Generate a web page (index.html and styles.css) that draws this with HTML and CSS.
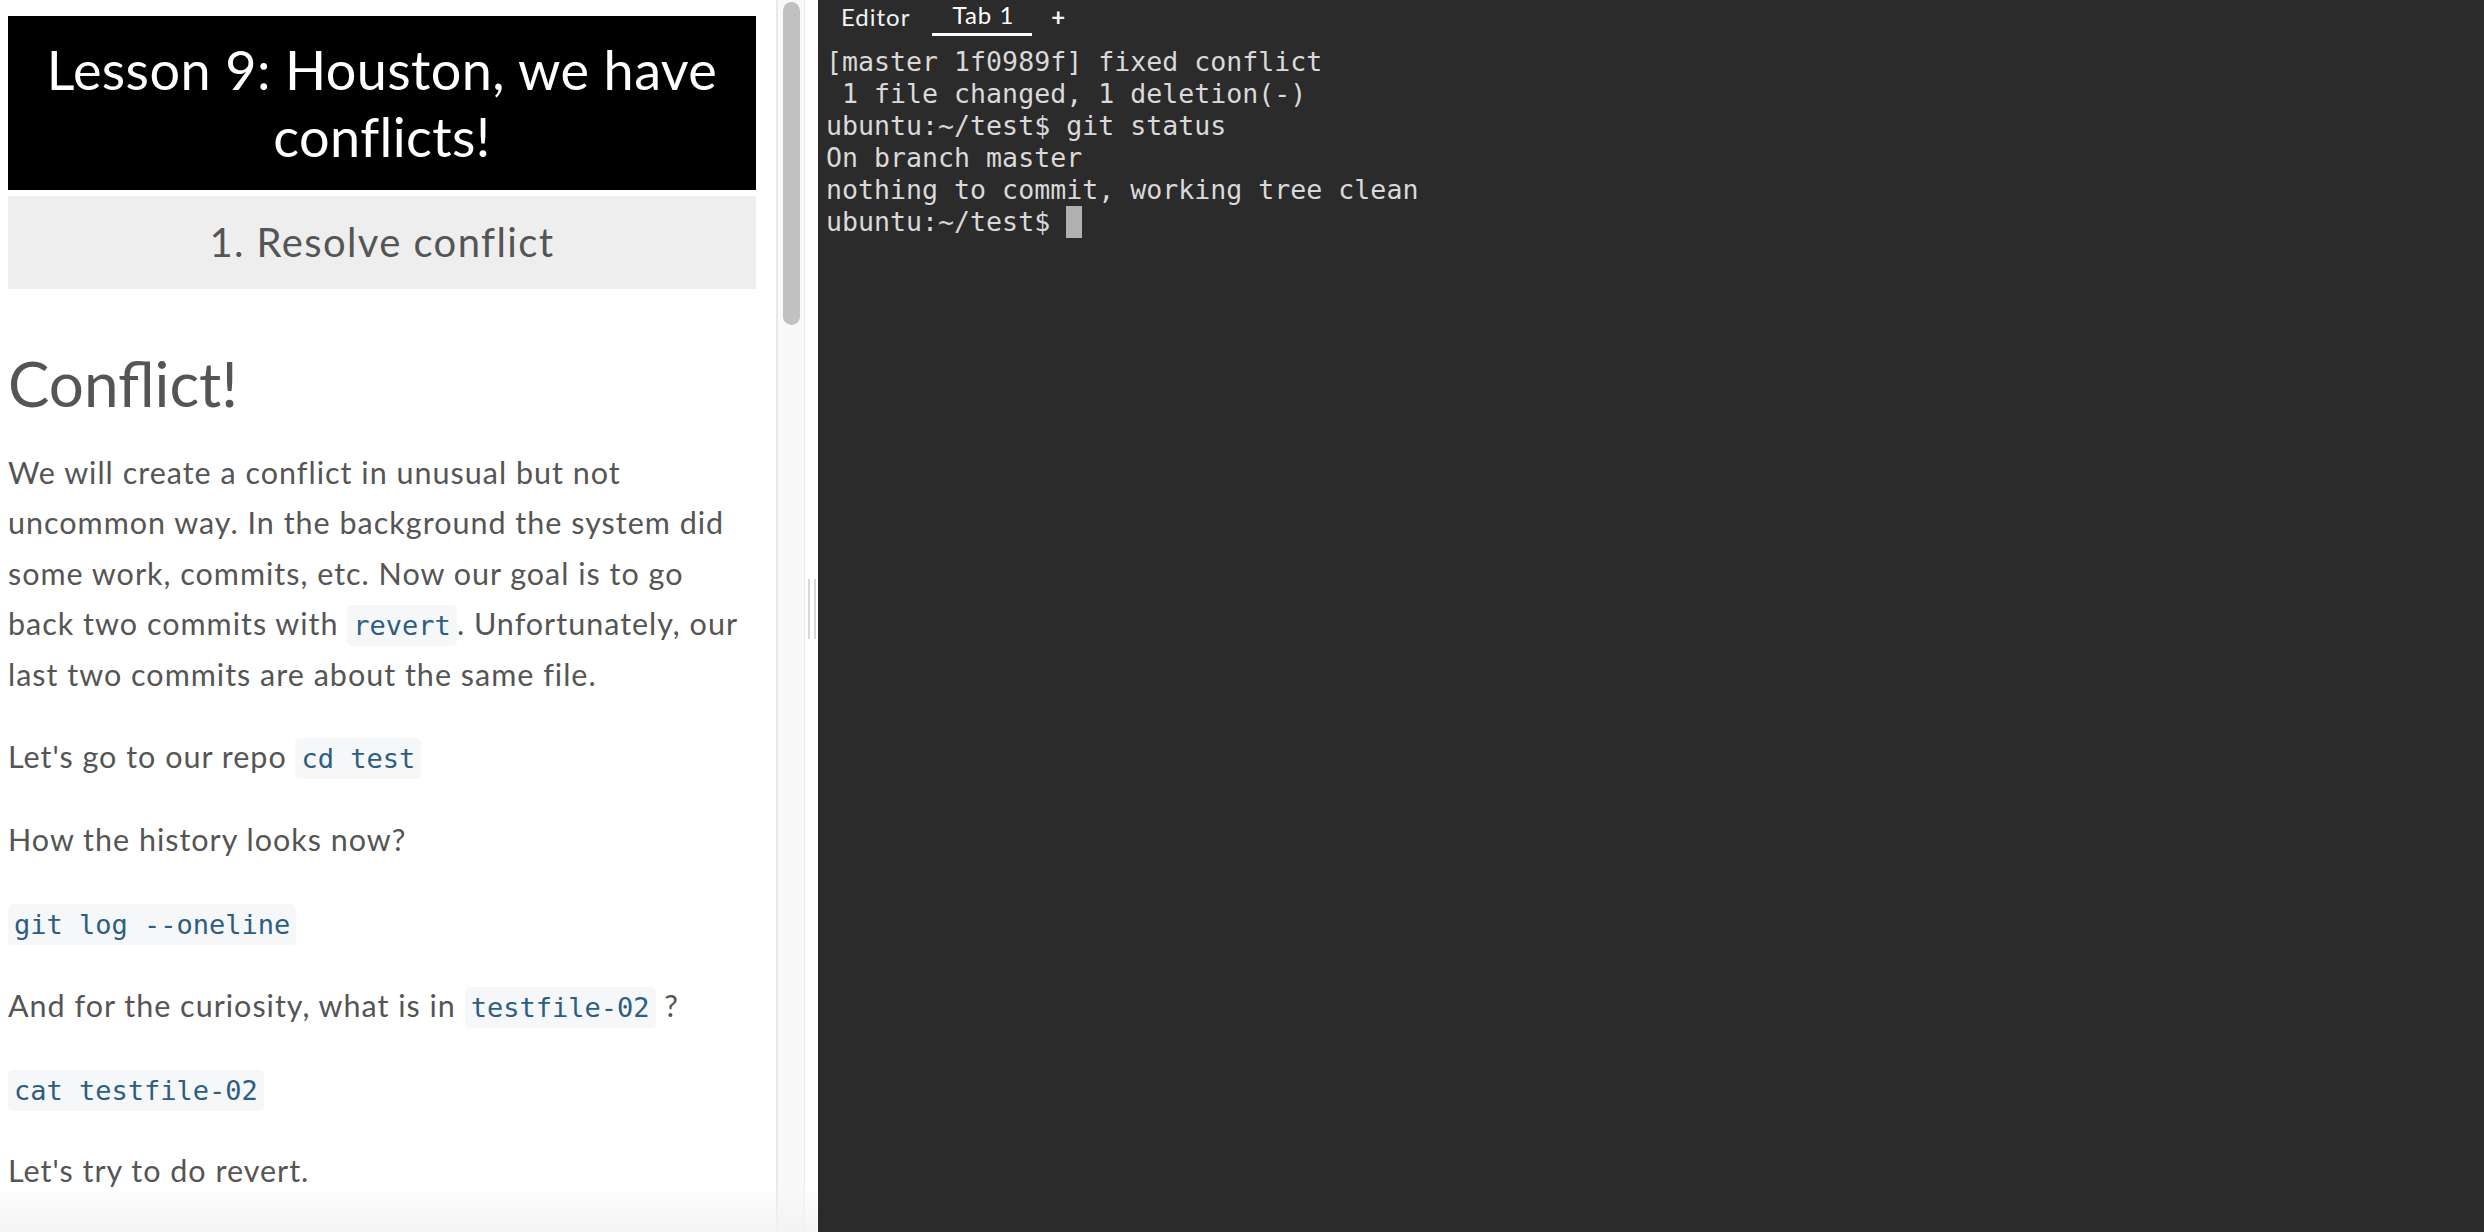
FILE: index.html
```html
<!DOCTYPE html>
<html lang="en">
<head>
<meta charset="utf-8">
<title>Lesson 9: Houston, we have conflicts!</title>
<link rel="stylesheet" href="styles.css">
</head>
<body>
<div class="app">
  <section class="lesson">
    <div class="lesson-content">
      <header class="lesson-title">Lesson 9: Houston, we have conflicts!</header>
      <div class="step-title">1. Resolve conflict</div>
      <h1>Conflict!</h1>
      <p>We will create a conflict in unusual but not uncommon way. In the background the system did some work, commits, etc. Now our goal is to go back two commits with <code>revert</code>. Unfortunately, our last two commits are about the same file.</p>
      <p>Let's go to our repo <code>cd test</code></p>
      <p>How the history looks now?</p>
      <p><code>git log --oneline</code></p>
      <p>And for the curiosity, what is in <code>testfile-02</code> ?</p>
      <p><code>cat testfile-02</code></p>
      <p>Let's try to do revert.</p>
    </div>
    <div class="scrollbar"><div class="scrollbar-thumb"></div></div>
  </section>
  <div class="splitter"><span class="grip"></span><span class="grip"></span></div>
  <section class="terminal">
    <nav class="tabs">
      <span class="tab">Editor</span>
      <span class="tab tab-active">Tab 1</span>
      <span class="tab tab-add">+</span>
    </nav>
    <pre class="term-output">[master 1f0989f] fixed conflict
 1 file changed, 1 deletion(-)
ubuntu:~/test$ git status
On branch master
nothing to commit, working tree clean
ubuntu:~/test$ <span class="cursor"> </span></pre>
  </section>
  <div class="bottom-fade"></div>
</div>
</body>
</html>
```

FILE: styles.css
```css
* { box-sizing: border-box; }

html, body {
  margin: 0;
  padding: 0;
  height: 100%;
  overflow: hidden;
  background: #ffffff;
}

.app {
  position: relative;
  display: flex;
  height: 100vh;
  font-family: "Lato", "Noto Sans", sans-serif;
}

/* ---------- lesson pane ---------- */
.lesson {
  display: flex;
  width: 805px;
  flex: 0 0 805px;
  height: 100%;
  background: #ffffff;
}

.lesson-content {
  flex: 1 1 auto;
  overflow: hidden;
  padding: 16px 20px 0 8px;
  color: #555555;
}

.lesson-title {
  background: #000000;
  color: #ffffff;
  text-align: center;
  font-size: 54px;
  letter-spacing: 0.4px;
  line-height: 67px;
  height: 174px;
  padding: 20px 10px 0;
}

.step-title {
  margin-top: 6px;
  background: #eeeeee;
  color: #555555;
  text-align: center;
  font-size: 40px;
  letter-spacing: 1.4px;
  height: 93px;
  line-height: 93px;
}

h1 {
  font-weight: 400;
  font-size: 62px;
  line-height: 76px;
  margin: 56px 0 26px;
  color: #555555;
}

p {
  font-size: 30.5px;
  letter-spacing: 1px;
  line-height: 50.4px;
  margin: 0 0 32.4px;
}

code {
  font-family: "DejaVu Sans Mono", "Liberation Mono", monospace;
  font-size: 27px;
  letter-spacing: 0;
  line-height: 1;
  color: #2d5d80;
  background: #f5f7f9;
  border-radius: 5px;
  padding: 5px 6px;
}

.scrollbar {
  flex: 0 0 29px;
  height: 100%;
  background: #f9f9f9;
  border-left: 2px solid #e8e8e8;
  border-right: 1px solid #ececec;
  padding: 2px 4px 0 5px;
}

.scrollbar-thumb {
  height: 323px;
  background: #c1c1c1;
  border-radius: 9px;
}

/* ---------- splitter ---------- */
.splitter {
  flex: 0 0 13px;
  display: flex;
  align-items: center;
  gap: 4px;
  padding-left: 3px;
}

.grip {
  width: 2px;
  height: 60px;
  background: #d8d8d8;
  margin-top: -14px;
}

/* ---------- terminal ---------- */
.terminal {
  flex: 1 1 auto;
  background: #2b2b2b;
  height: 100%;
  display: flex;
  flex-direction: column;
}

.tabs {
  display: flex;
  height: 36px;
  padding-left: 3px;
  gap: 2px;
}

.tab {
  color: #f2f2f2;
  font-size: 24px;
  letter-spacing: 1px;
  line-height: 34px;
  padding: 0 20px;
  height: 36px;
  border-bottom: 3px solid transparent;
}

.tab-active {
  color: #ffffff;
  border-bottom-color: #ffffff;
  line-height: 30px;
  padding: 0 18px 0 20px;
}

.tab-add {
  font-weight: 700;
  padding: 0 14px 0 17px;
}

.term-output {
  margin: 0;
  padding: 10px 0 0 8px;
  font-family: "DejaVu Sans Mono", "Liberation Mono", monospace;
  font-size: 26.6px;
  line-height: 32px;
  color: #d9d9d9;
}

.cursor {
  display: inline-block;
  width: 16px;
  height: 32px;
  vertical-align: top;
  background: #b0b0b0;
}

.bottom-fade {
  position: absolute;
  left: 0;
  bottom: 0;
  width: 818px;
  height: 48px;
  background: linear-gradient(to bottom, rgba(243,243,243,0), rgba(243,243,243,0.9));
  pointer-events: none;
}
```
